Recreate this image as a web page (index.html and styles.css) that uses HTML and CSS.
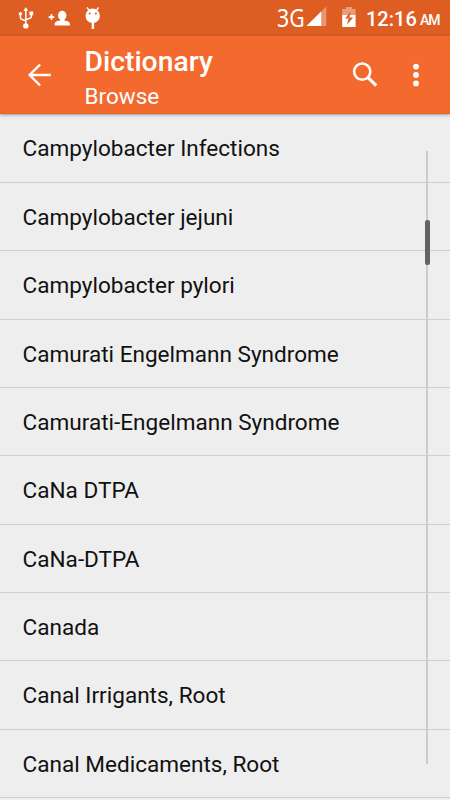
FILE: index.html
```html
<!DOCTYPE html>
<html lang="en">
<head>
    <meta charset="UTF-8">
    <meta name="viewport" content="width=device-width, initial-scale=1.0">
    <title>Dictionary</title>
    <link rel="stylesheet" href="styles.css">
</head>
<body>

    <div class="status-bar">
        <svg class="status-left" width="110" height="36" viewBox="0 0 110 36" fill="#fff">
            <!-- usb -->
            <path d="M25.8 7l2.3 4h-4.6z"/>
            <path d="M25.8 10v15M20.4 14v3.6q0 1.6 1.6 1.9l3.8 1.2M31.3 13v3.4q0 1.6-1.6 1.9l-3.9 1.4" fill="none" stroke="#fff" stroke-width="1.5"/>
            <circle cx="25.8" cy="25.9" r="2.7"/>
            <circle cx="20.4" cy="13.8" r="1.8"/>
            <path d="M29.4 11.4h3.8v3.8h-3.8z"/>
            <!-- add contact -->
            <path d="M48.7 16.2h5.6v1.8h-5.6z"/>
            <path d="M50.6 14.2h1.8v5.6h-1.8z"/>
            <ellipse cx="62.2" cy="15.6" rx="4.2" ry="4.9"/>
            <path d="M60 18h4.4v3H60z"/>
            <path d="M54.7 25.6v-1.8q0-2.2 3.6-3h7.8q3.8.8 3.8 3v1.8z"/>
            <!-- debug head -->
            <circle cx="92.7" cy="15.8" r="7.2"/>
            <path d="M87 7.5l2.6 3.4M98.6 7.5l-2.6 3.4" stroke="#fff" stroke-width="1.3"/>
            <path d="M91.7 21h2.4v8h-2.4z"/>
            <circle cx="89.6" cy="13.4" r="1" fill="#de5d22"/>
            <circle cx="95.9" cy="13.4" r="1" fill="#de5d22"/>
        </svg>
        <div class="status-right">
            <span class="network">3G</span>
            <svg class="signal" width="21" height="36" viewBox="0 0 21 36">
                <path d="M20.3 6.5v19.6H.5z" fill="#fff" opacity=".35"/>
                <path d="M15.2 11.4v14.7H.5z" fill="#fff"/>
            </svg>
            <svg class="battery" width="14" height="36" viewBox="0 0 14 36">
                <path d="M4 7h6v2h3.6v6H.2V9H4z" fill="#fff" opacity=".4"/>
                <path d="M.2 15h13.4v12H.2z" fill="#fff"/>
                <path d="M8.8 11.5L3 18.6h3.6l-1.6 6.2 6.2-7.4H7.4z" fill="#de5d22"/>
            </svg>
            <span class="clock">12:16</span>
            <span class="ampm">AM</span>
        </div>
    </div>

    <header class="toolbar">
        <svg class="back" width="24" height="24" viewBox="0 0 24 24" fill="none" stroke="#fff" stroke-width="2.4">
            <path d="M23.8 12H2.7M13.1 1.5L2.6 12l10.5 10.5"/>
        </svg>
        <div class="titles">
            <h1>Dictionary</h1>
            <p>Browse</p>
        </div>
        <svg class="search" width="26" height="26" viewBox="0 0 26 26" fill="none" stroke="#fff">
            <circle cx="10.2" cy="9.6" r="8.1" stroke-width="2.6"/>
            <path d="M15.9 15.3l8.3 8.3" stroke-width="3.2"/>
        </svg>
        <svg class="more" width="6" height="24" viewBox="0 0 6 24" fill="#fff">
            <circle cx="3" cy="3.6" r="2.9"/>
            <circle cx="3" cy="12" r="2.9"/>
            <circle cx="3" cy="20.4" r="2.9"/>
        </svg>
    </header>

    <main class="content">
        <ul class="word-list">
            <li>Campylobacter Infections</li>
            <li>Campylobacter jejuni</li>
            <li>Campylobacter pylori</li>
            <li>Camurati Engelmann Syndrome</li>
            <li>Camurati-Engelmann Syndrome</li>
            <li>CaNa DTPA</li>
            <li>CaNa-DTPA</li>
            <li>Canada</li>
            <li>Canal Irrigants, Root</li>
            <li>Canal Medicaments, Root</li>
        </ul>
        <div class="scroll-track">
            <div class="scroll-thumb"></div>
        </div>
    </main>

</body>
</html>
```

FILE: styles.css
```css
* {
    box-sizing: border-box;
}
body {
    font-family: Roboto, sans-serif;
    background-color: #eee;
    color: #111;
    margin: 0;
    height: 800px;
    overflow: hidden;
    display: flex;
    flex-direction: column;
}
svg {
    display: block;
    flex: none;
}
.status-bar {
    height: 36px;
    flex: none;
    background-color: #de5d22;
    color: white;
    display: flex;
    justify-content: space-between;
}
.status-right {
    display: flex;
    width: 173px;
    line-height: 36px;
    white-space: nowrap;
}
.network {
    width: 29px;
    font-family: "Noto Sans", sans-serif;
    font-size: 25px;
    line-height: 35px;
    transform: scaleX(0.85);
    transform-origin: left;
}
.battery {
    margin-left: 15px;
}
.clock {
    margin-left: 10px;
    width: 54px;
    font-size: 20px;
    font-weight: 500;
    line-height: 38px;
}
.ampm {
    font-size: 14px;
    font-weight: 500;
    line-height: 41px;
    letter-spacing: -1px;
}
.toolbar {
    height: 78px;
    flex: none;
    background-color: #f4692e;
    color: white;
    display: flex;
    align-items: center;
    padding: 0 31px 0 27px;
    border-bottom: 1px solid #e4622a;
    box-shadow: 0 1px 3px rgba(0,0,0,0.35);
    z-index: 1;
}
.titles {
    margin-left: 33.5px;
    padding-top: 10px;
    flex: 1;
}
.titles h1 {
    margin: 0;
    font-size: 28.3px;
    font-weight: 500;
    line-height: 34px;
}
.titles p {
    margin: 0;
    font-size: 22.5px;
    line-height: 35px;
}
.search {
    margin-right: 35px;
}
.content {
    position: relative;
    flex: 1;
}
.word-list {
    list-style: none;
    margin: 0;
    padding: 0.6px 0 0;
}
.word-list li {
    height: 68.35px;
    line-height: 70px;
    padding-left: 22.6px;
    font-size: 22.55px;
    border-bottom: 1px solid #cfcfcf;
}
.word-list li:first-child {
    line-height: 67px;
}
/* fast scroll handle, drawn over the list */
.scroll-track {
    position: absolute;
    top: 37px;
    right: 22px;
    width: 2px;
    height: 613px;
    background-color: #ccc;
}
.scroll-thumb {
    position: absolute;
    top: 69px;
    left: -1px;
    width: 5px;
    height: 45px;
    border-radius: 2px;
    background-color: #636363;
}
```
